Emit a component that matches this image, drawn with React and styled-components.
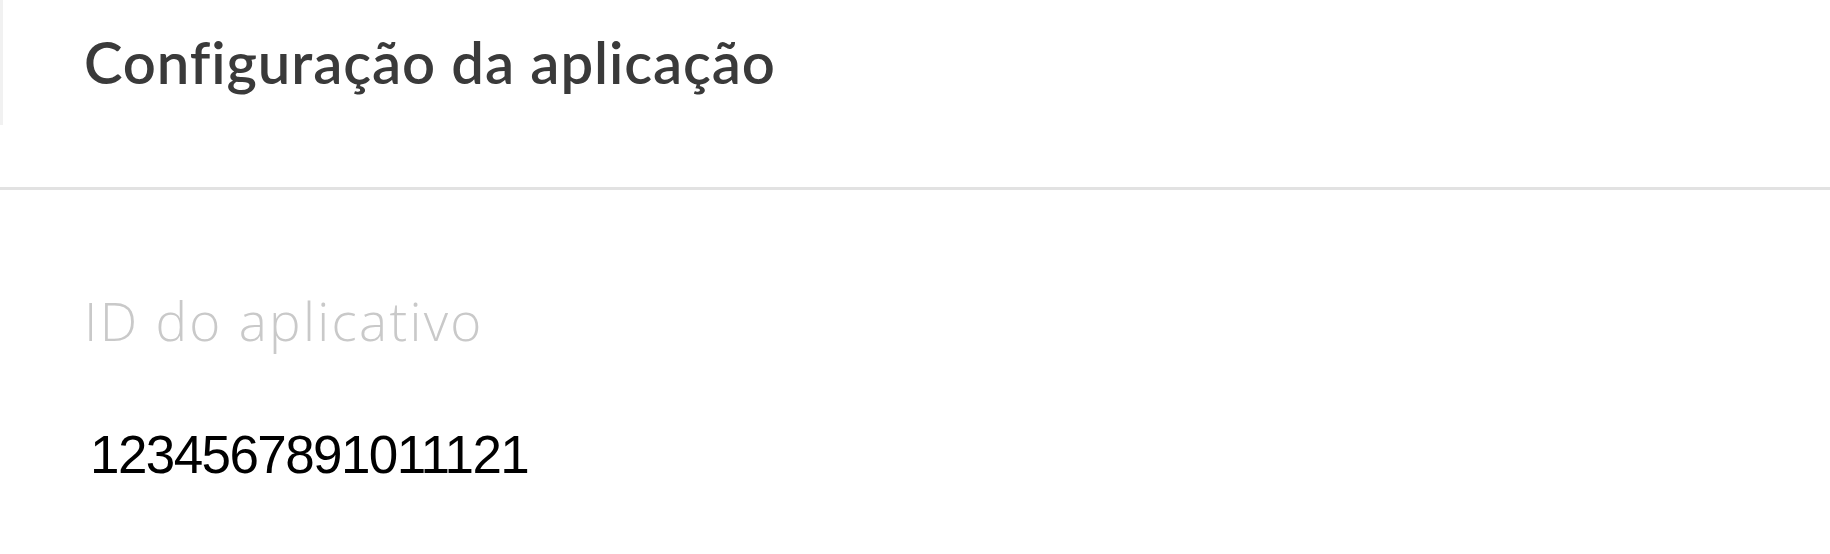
import React from "react";
import styled, { createGlobalStyle } from "styled-components";

const Global = createGlobalStyle`
  html, body { margin: 0; padding: 0; background: #ffffff; }
  body { width: 1830px; height: 554px; overflow: hidden; }
`;

const Page = styled.div`
  display: flex;
  flex-direction: column;
  width: 1830px;
  height: 554px;
  background: #fff;
`;

const Header = styled.header`
  display: flex;
  align-items: flex-start;
  height: 187px;
  border-bottom: 3px solid #e2e2e2;
`;

const EdgeShade = styled.div`
  width: 3px;
  height: 125px;
  background: #f1f1f1;
  flex: none;
`;

const Title = styled.h1`
  margin: 33px 0 0 81px;
  font-family: Lato, "Open Sans", sans-serif;
  font-weight: 600;
  font-size: 58px;
  line-height: 1;
  color: #3a3a3a;
  letter-spacing: 0.9px;
  font-variant-ligatures: none;
`;

const Body = styled.section`
  display: flex;
  flex-direction: column;
  padding: 104px 0 0 84px;
`;

const Label = styled.div`
  font-family: "Open Sans", Lato, sans-serif;
  font-weight: 300;
  font-size: 53px;
  line-height: 1;
  color: #c9c9c9;
  letter-spacing: 2.3px;
  font-variant-ligatures: none;
`;

const Value = styled.div`
  margin-top: 81px;
  padding-left: 6px;
  font-family: "Liberation Sans", Arial, sans-serif;
  font-size: 53px;
  line-height: 1;
  color: #000;
  letter-spacing: -1.6px;
`;

export default function App() {
  return (
    <Page>
      <Global />
      <Header>
        <EdgeShade />
        <Title>Configuração da aplicação</Title>
      </Header>
      <Body>
        <Label>ID do aplicativo</Label>
        <Value>1234567891011121</Value>
      </Body>
    </Page>
  );
}
